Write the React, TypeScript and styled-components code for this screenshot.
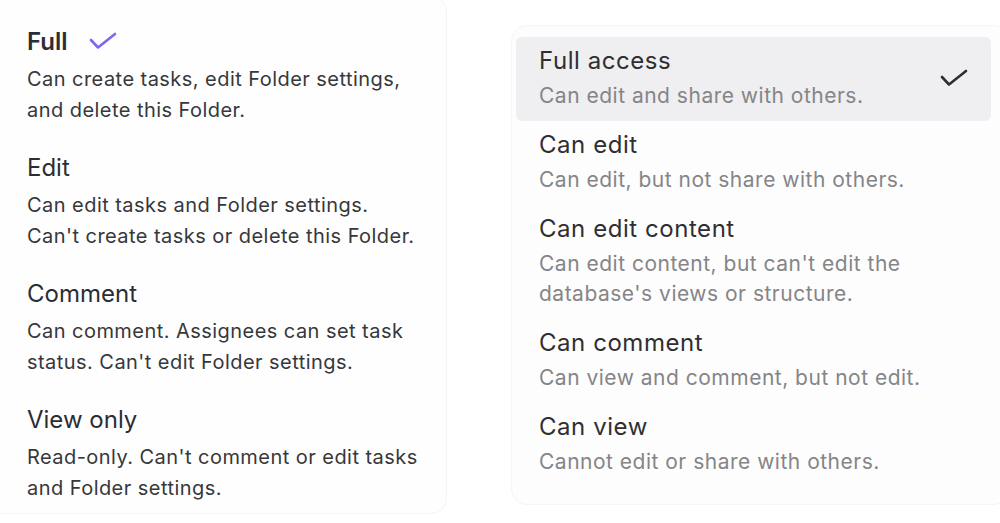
import React from 'react';
import styled, { createGlobalStyle } from 'styled-components';

const GlobalStyle = createGlobalStyle`
  html, body {
    margin: 0;
    padding: 0;
    background: #ffffff;
  }
  body {
    font-family: Inter, "Noto Sans", "Liberation Sans", sans-serif;
    -webkit-font-smoothing: antialiased;
  }
`;

const Page = styled.div`
  display: flex;
  align-items: flex-start;
  gap: 64px;
  width: 1000px;
  height: 523px;
  overflow: hidden;
  background: #ffffff;
`;

const RoleCard = styled.div`
  box-sizing: border-box;
  width: 447px;
  height: 518px;
  margin-top: -4px;
  padding: 31px 10px 0 27px;
  background: #fefefe;
  border: 1px solid #f5f5f7;
  border-left: none;
  border-radius: 0 16px 16px 0;
  display: flex;
  flex-direction: column;
  gap: 28px;
`;

const Role = styled.div`
  display: flex;
  flex-direction: column;
  gap: 8px;
`;

const RoleTitle = styled.div<{ $active?: boolean }>`
  display: flex;
  align-items: center;
  gap: 20px;
  font-size: 24px;
  line-height: 28px;
  font-weight: ${(p) => (p.$active ? 600 : 400)};
  color: #2a2e34;
`;

const RoleDesc = styled.div`
  font-size: 20px;
  line-height: 31px;
  color: #36383b;
  letter-spacing: 0.45px;
  white-space: nowrap;
`;

const AccessCard = styled.div`
  box-sizing: border-box;
  flex: 1;
  height: 480px;
  margin-top: 25px;
  margin-right: -10px;
  padding: 11px 18px 0 4px;
  background: #fdfdfd;
  border: 1px solid #f5f5f7;
  border-radius: 16px;
  display: flex;
  flex-direction: column;
`;

const Access = styled.div<{ $selected?: boolean }>`
  display: flex;
  align-items: center;
  justify-content: space-between;
  padding: 9px 22px 10px 23px;
  border-radius: 6px;
  background: ${(p) => (p.$selected ? '#efeef0' : 'transparent')};
`;

const AccessText = styled.div`
  display: flex;
  flex-direction: column;
  gap: 5px;
`;

const AccessTitle = styled.div`
  font-size: 24px;
  line-height: 30px;
  color: #2f2f31;
  letter-spacing: 0.55px;
`;

const AccessDesc = styled.div`
  font-size: 21px;
  line-height: 30px;
  color: #858588;
  letter-spacing: 0.5px;
  white-space: nowrap;
`;

const Check = ({ color, width }: { color: string; width: number }) => (
  <svg width="30" height="20" viewBox="0 0 30 20" fill="none">
    <polyline
      points="3,8 10,15.5 27,2"
      stroke={color}
      strokeWidth={width}
      strokeLinecap="round"
      strokeLinejoin="round"
    />
  </svg>
);

const roles = [
  { title: 'Full', active: true, lines: ['Can create tasks, edit Folder settings,', 'and delete this Folder.'] },
  { title: 'Edit', lines: ['Can edit tasks and Folder settings.', "Can't create tasks or delete this Folder."] },
  { title: 'Comment', lines: ['Can comment. Assignees can set task', "status. Can't edit Folder settings."] },
  { title: 'View only', lines: ["Read-only. Can't comment or edit tasks", 'and Folder settings.'] },
];

const levels = [
  { title: 'Full access', selected: true, lines: ['Can edit and share with others.'] },
  { title: 'Can edit', lines: ['Can edit, but not share with others.'] },
  { title: 'Can edit content', lines: ["Can edit content, but can't edit the", "database's views or structure."] },
  { title: 'Can comment', lines: ['Can view and comment, but not edit.'] },
  { title: 'Can view', lines: ['Cannot edit or share with others.'] },
];

export default function App() {
  return (
    <>
      <GlobalStyle />
      <Page>
        <RoleCard>
          {roles.map((r) => (
            <Role key={r.title}>
              <RoleTitle $active={r.active}>
                {r.title}
                {r.active && <Check color="#7b68ee" width={2.6} />}
              </RoleTitle>
              <RoleDesc>
                {r.lines.map((l) => (
                  <div key={l}>{l}</div>
                ))}
              </RoleDesc>
            </Role>
          ))}
        </RoleCard>
        <AccessCard>
          {levels.map((lv) => (
            <Access key={lv.title} $selected={lv.selected}>
              <AccessText>
                <AccessTitle>{lv.title}</AccessTitle>
                <AccessDesc>
                  {lv.lines.map((l) => (
                    <div key={l}>{l}</div>
                  ))}
                </AccessDesc>
              </AccessText>
              {lv.selected && <Check color="#2f2f31" width={2.6} />}
            </Access>
          ))}
        </AccessCard>
      </Page>
    </>
  );
}
